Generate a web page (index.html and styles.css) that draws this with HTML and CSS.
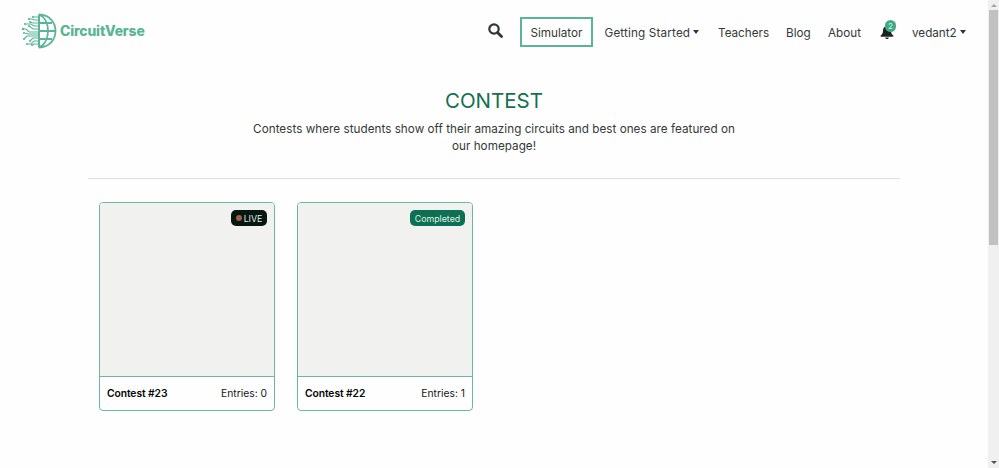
FILE: index.html
```
<!DOCTYPE html>
<html lang="en">
<head>
<meta charset="utf-8">
<title>Contest - CircuitVerse</title>
<link rel="stylesheet" href="styles.css">
</head>
<body>
<div class="page">
  <header class="navbar">
    <a class="brand">
      <svg class="brand-mark" width="36" height="36" viewBox="0 0 36 36" fill="none" stroke="#59b595" stroke-width="1.1">
        <path d="M18 1.500v33" stroke-width="2"/>
        <path d="M18 1.500C40 2 40 34 18 34.500M18 1.500C30 7 30 29 18 34.500M18 10h13M18 18h16M18 26h13" stroke-width="1.800"/>
        <path d="M17 4h-5M17 7h-4l-2-1H8M17 10h-5l-3-1M17 13h-4l-3-2H5M17 16h-5l-4-3M17 19H8l-3-3H3M17 21H7l-3-1M17 23H6l-3 3M17 25h-5l-3 3M17 28h-4l-3 3H7M17 31h-4l-2 1"/>
        <g fill="#59b595" stroke="none"><circle cx="12" cy="4" r="1.100"/><circle cx="8" cy="6" r="1.100"/><circle cx="9" cy="9" r="1"/><circle cx="4" cy="11" r="1.100"/><circle cx="8" cy="13" r="1"/><circle cx="2" cy="16" r="1.200"/><circle cx="3" cy="20" r="1"/><circle cx="3" cy="26" r="1.100"/><circle cx="9" cy="28" r="1"/><circle cx="6" cy="31" r="1.100"/><circle cx="11" cy="32" r="1"/></g>
      </svg>
      <span class="brand-name">CircuitVerse</span>
    </a>
    <nav class="nav">
      <svg class="search" width="15" height="15" viewBox="0 0 15 15" fill="none" stroke="#303634"><circle cx="6" cy="6" r="4.700" stroke-width="2.200"/><path d="M9.500 9.500l4 4" stroke-width="2.800" stroke-linecap="round"/></svg>
      <a class="simulator"><span>Simulator</span></a>
      <a class="link started">Getting Started<i class="caret"></i></a>
      <a class="link teachers">Teachers</a>
      <a class="link blog">Blog</a>
      <a class="link about">About</a>
      <a class="bell">
        <svg width="14" height="14" viewBox="0 0 14 14" fill="#1c2421"><path d="M6.200 0h1.600v1.200C10 1.700 11 3.400 11 5.500c0 2.500.8 3.700 2 4.700.9.800.5 1.600-.3 1.600H1.300C.5 11.800.1 11 1 10.200c1.200-1 2-2.200 2-4.700 0-2.100 1-3.800 3.200-4.300zM5.200 12.400h3.600C8.600 14.500 5.400 14.500 5.200 12.400z"/></svg>
        <span class="count">2</span>
      </a>
      <a class="link user">vedant2<i class="caret"></i></a>
    </nav>
  </header>
  <main class="container">
    <section class="intro">
      <h1>CONTEST</h1>
      <p>Contests where students show off their amazing circuits and best ones are featured on<br>our homepage!</p>
    </section>
    <section class="cards">
      <article class="card">
        <div class="preview"><span class="badge live"><i class="dot"></i>LIVE</span></div>
        <div class="card-footer"><b>Contest #23</b><span>Entries: 0</span></div>
      </article>
      <article class="card">
        <div class="preview"><span class="badge done">Completed</span></div>
        <div class="card-footer"><b>Contest #22</b><span>Entries: 1</span></div>
      </article>
    </section>
  </main>
</div>
<aside class="scrollbar">
  <i class="arrow up"></i><div class="thumb"></div><i class="arrow down"></i>
</aside>
</body>
</html>
```
FILE: styles.css
```
* { box-sizing: border-box; }
body {
  margin: 0;
  height: 468px;
  display: flex;
  overflow: hidden;
  background: #fefefe;
  color: #343a38;
  font-family: Inter, "Liberation Sans", sans-serif;
  font-size: 11.7px;
}
.page { width: 988px; }
.navbar { height: 64px; display: flex; align-items: center; padding-left: 21px; }
.brand { display: flex; align-items: center; width: 467px; height: 36px; margin-bottom: 2px; }
.brand-name { margin-left: 3px; color: #59b595; font-size: 13.9px; font-weight: 800; letter-spacing: -0.14px; white-space: nowrap; }
.nav { display: flex; align-items: center; height: 64px; white-space: nowrap; }
.search { margin: 0 17px 3px 0; }
.simulator {
  width: 73px;
  height: 30px;
  display: flex;
  align-items: center;
  justify-content: center;
  border: 2px solid #59b595;
}
.simulator span { padding-top: 1px; }
.link { display: flex; align-items: center; height: 30px; padding-top: 1px; }
.started { width: 96px; margin-left: 11.5px; margin-right: 17.5px; letter-spacing: 0.16px; }
.teachers { width: 50px; margin-right: 18px; }
.blog { width: 25px; margin-right: 17px; }
.about { width: 34px; margin-right: 18px; }
.caret { margin-left: 3px; margin-bottom: 1px; border: 3.5px solid transparent; border-width: 4px 3.5px 0; border-top-color: #303634; }
.bell { position: relative; width: 14px; height: 14px; margin-right: 18px; }
.bell svg { display: block; }
.count {
  position: absolute;
  left: 5px;
  top: -5px;
  width: 11px;
  height: 12px;
  border-radius: 6px;
  background: #43a885;
  color: #d4f2e6;
  font-size: 8px;
  line-height: 12px;
  text-align: center;
}
.container { width: 812px; margin-left: 88px; }
.intro { height: 115px; padding-top: 23px; text-align: center; border-bottom: 1px solid #dcdedd; }
h1 { margin: 0; color: #15704f; font-size: 20.5px; line-height: 27px; font-weight: 400; }
p { margin: 7px 0 0; line-height: 17px; letter-spacing: 0.03px; white-space: nowrap; }
.cards { display: flex; gap: 22px; padding: 23px 11px; }
.card { width: 176px; height: 209px; border: 1px solid #69b99e; border-radius: 4px; overflow: hidden; }
.preview { height: 174px; padding: 7px; display: flex; justify-content: flex-end; background: #f1f1f0; border-bottom: 1px solid #69b99e; }
.badge { height: 16px; display: flex; align-items: center; justify-content: center; border-radius: 5px; color: #e0eee8; font-size: 8.8px; }
.live { width: 36px; background: #05170f; }
.dot { width: 6px; height: 6px; margin-right: 2px; border-radius: 50%; background: #a45a4c; }
.done { width: 55px; background: #0c7053; }
.card-footer { height: 32px; padding: 0 7px; display: flex; justify-content: space-between; align-items: center; color: #151716; font-size: 10.3px; }
.card-footer b { color: #050505; font-weight: 600; letter-spacing: -0.08px; }
.scrollbar { width: 11px; height: 468px; display: flex; flex-direction: column; align-items: center; background: #f0f0f0; }
.thumb { width: 9px; height: 235px; margin-top: 3px; background: #c1c1c1; }
.arrow { border: 3px solid transparent; }
.up { margin-top: 4px; border-top: 0; border-bottom-color: #a3a3a3; }
.down { margin-top: auto; margin-bottom: 4px; border-bottom: 0; border-top-color: #505050; }
```
